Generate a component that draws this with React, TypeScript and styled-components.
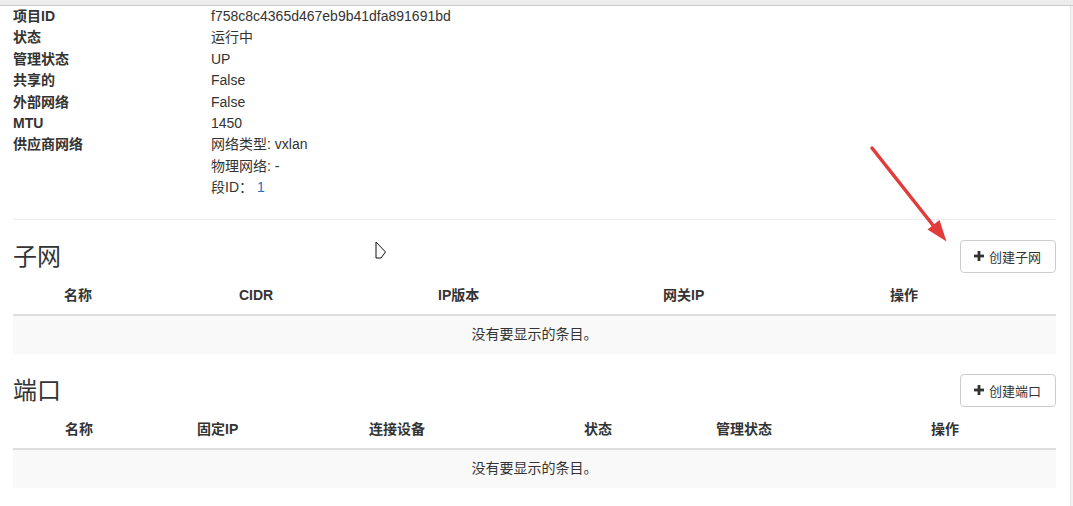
import React from "react";
import styled, { createGlobalStyle } from "styled-components";

const GlobalStyle = createGlobalStyle`
  html, body {
    margin: 0;
    padding: 0;
    background: #fff;
  }
  body {
    font-family: "Liberation Sans", "Noto Sans CJK SC", Arial, sans-serif;
    font-size: 14px;
    color: #333;
  }
  * { box-sizing: border-box; }
`;

const Page = styled.div`
  position: relative;
  width: 1073px;
  height: 506px;
  overflow: hidden;
  display: flex;
  flex-direction: column;
`;

const TopBar = styled.div`
  height: 6px;
  flex: none;
  background: #ececec;
  border-bottom: 1px solid #c9c9c9;
`;

const Body = styled.div`
  flex: 1;
  display: flex;
`;

const Main = styled.main`
  flex: 1;
  padding: 0 14px 0 13px;
`;

const ScrollStrip = styled.div`
  width: 3px;
  flex: none;
  background: #f3f3f3;
  border-left: 1px solid #e2e2e2;
`;

const DetailList = styled.dl`
  margin: 0;
  display: grid;
  grid-template-columns: 198px 1fr;
  line-height: 21.4px;
`;

const Term = styled.dt`
  font-weight: bold;
  color: #333;
`;

const Desc = styled.dd`
  margin: 0;
  color: #333;
`;

const DescLine = styled.div``;

const LinkValue = styled.span`
  color: #2470c2;
`;

const Rule = styled.hr`
  margin: 20px 0 20px;
  border: 0;
  border-top: 1px solid #eee;
`;

const Section = styled.section`
  & + & {
    margin-top: 20px;
  }
`;

const SectionHeader = styled.div`
  display: flex;
  justify-content: space-between;
  align-items: center;
  height: 33px;
`;

const Heading = styled.h3`
  margin: 0;
  padding-top: 3px;
  font-size: 24px;
  font-weight: normal;
  line-height: 1.1;
  color: #333;
`;

const ActionButton = styled.button`
  height: 33px;
  display: inline-flex;
  align-items: center;
  gap: 5px;
  padding: 0 14px 0 13px;
  border: 1px solid #ccc;
  border-radius: 4px;
  background: #fff;
  color: #333;
  font-family: inherit;
  font-size: 13px;
  cursor: pointer;
`;

const Table = styled.div`
  margin-top: 5px;
`;

const HeaderRow = styled.div<{ $cols: string }>`
  display: grid;
  grid-template-columns: ${(p) => p.$cols};
  padding: 7px 0 9px;
  line-height: 20px;
  font-weight: bold;
  border-bottom: 2px solid #ddd;
`;

const HeaderCell = styled.div`
  white-space: nowrap;
`;

const EmptyRow = styled.div`
  background: #f9f9f9;
  padding: 8px 0 10px;
  line-height: 20px;
  text-align: center;
  color: #333;
`;

const Overlay = styled.svg`
  position: absolute;
  left: 0;
  top: 0;
  pointer-events: none;
`;

const PlusIcon = () => (
  <svg width="10" height="10" viewBox="0 0 10 10" aria-hidden="true">
    <rect x="3.6" y="0" width="2.8" height="10" fill="#333" />
    <rect x="0" y="3.6" width="10" height="2.8" fill="#333" />
  </svg>
);

const details: { label: string; value: React.ReactNode }[] = [
  { label: "项目ID", value: "f758c8c4365d467eb9b41dfa891691bd" },
  { label: "状态", value: "运行中" },
  { label: "管理状态", value: "UP" },
  { label: "共享的", value: "False" },
  { label: "外部网络", value: "False" },
  { label: "MTU", value: "1450" },
  {
    label: "供应商网络",
    value: (
      <>
        <DescLine>网络类型: vxlan</DescLine>
        <DescLine>物理网络: -</DescLine>
        <DescLine>
          段ID： <LinkValue>1</LinkValue>
        </DescLine>
      </>
    ),
  },
];

type TableSpec = {
  title: string;
  button: string;
  cols: string;
  headers: string[];
};

const tables: TableSpec[] = [
  {
    title: "子网",
    button: "创建子网",
    cols: "51px 175px 199px 225px 227px 1fr",
    headers: ["", "名称", "CIDR", "IP版本", "网关IP", "操作"],
  },
  {
    title: "端口",
    button: "创建端口",
    cols: "52px 132px 172px 215px 132px 215px 1fr",
    headers: ["", "名称", "固定IP", "连接设备", "状态", "管理状态", "操作"],
  },
];

export default function App() {
  return (
    <>
      <GlobalStyle />
      <Page>
        <TopBar />
        <Body>
          <Main>
            <DetailList>
              {details.map((d) => (
                <React.Fragment key={d.label}>
                  <Term>{d.label}</Term>
                  <Desc>{d.value}</Desc>
                </React.Fragment>
              ))}
            </DetailList>
            <Rule />
            {tables.map((t) => (
              <Section key={t.title}>
                <SectionHeader>
                  <Heading>{t.title}</Heading>
                  <ActionButton>
                    <PlusIcon />
                    {t.button}
                  </ActionButton>
                </SectionHeader>
                <Table>
                  <HeaderRow $cols={t.cols}>
                    {t.headers.map((h, i) => (
                      <HeaderCell key={i}>{h}</HeaderCell>
                    ))}
                  </HeaderRow>
                  <EmptyRow>没有要显示的条目。</EmptyRow>
                </Table>
              </Section>
            ))}
          </Main>
          <ScrollStrip />
        </Body>
        <Overlay width="1073" height="506" viewBox="0 0 1073 506">
          <line
            x1="872"
            y1="148"
            x2="936"
            y2="229"
            stroke="#e23b3b"
            strokeWidth="3.5"
            strokeLinecap="round"
          />
          <polygon points="946.5,241.5 927.5,229.5 939.5,220" fill="#e23b3b" />
          <polygon
            points="376,242 385.5,252 381,258 376,258"
            fill="#fff"
            stroke="#111"
            strokeWidth="1"
            strokeLinejoin="miter"
          />
        </Overlay>
      </Page>
    </>
  );
}
